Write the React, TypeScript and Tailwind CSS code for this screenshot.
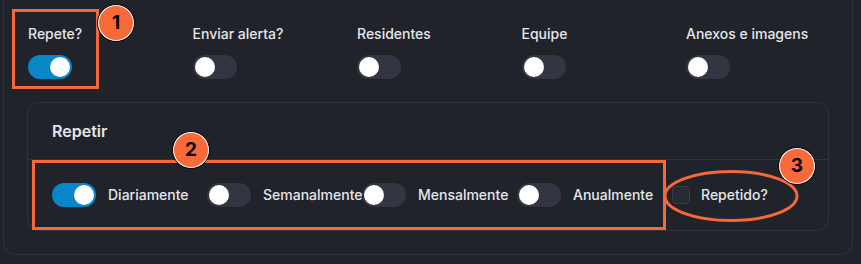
import React from 'react';

const font = { fontFamily: 'Inter, "Noto Sans", sans-serif' };

function Toggle({ on }: { on?: boolean }) {
  return (
    <div
      className={`flex h-6 w-11 shrink-0 items-center rounded-full p-0.5 ${
        on ? 'justify-end bg-[#0786c8]' : 'justify-start bg-[#343542]'
      }`}
    >
      <div className="h-5 w-5 rounded-full bg-white" />
    </div>
  );
}

function Badge({ n, className }: { n: string; className: string }) {
  return (
    <div
      className={`absolute flex h-[38px] w-[38px] items-center justify-center rounded-full border border-black bg-white ${className}`}
    >
      <div className="flex h-[34px] w-[34px] items-center justify-center rounded-full bg-[#f96a3a] text-[19px] font-bold text-black">
        {n}
      </div>
    </div>
  );
}

const topItems = [
  { label: 'Repete?', on: true },
  { label: 'Enviar alerta?' },
  { label: 'Residentes' },
  { label: 'Equipe' },
  { label: 'Anexos e imagens' },
];

const repeatItems = [
  { label: 'Diariamente', on: true },
  { label: 'Semanalmente' },
  { label: 'Mensalmente' },
  { label: 'Anualmente' },
];

export default function App() {
  return (
    <div className="relative h-[264px] w-[861px] overflow-hidden bg-[#21232b] text-[#e6e6e9]" style={font}>
      <div className="ml-[3px] mt-[-20px] w-[850px] rounded-xl border border-[#31333d] px-[23px] pb-[23px] pt-[43px]">
        <div className="grid grid-cols-[repeat(5,164.5px)] pl-px">
          {topItems.map((it) => (
            <div key={it.label} className="flex flex-col items-start gap-[11px]">
              <span className="text-sm font-medium leading-5">{it.label}</span>
              <Toggle on={it.on} />
            </div>
          ))}
        </div>

        <div className="mt-[23px] rounded-xl border border-[#31333d]">
          <div className="border-b border-[#31333d] px-6 py-4 text-base font-semibold leading-6">Repetir</div>
          <div className="flex items-center px-6 py-[23px]">
            {repeatItems.map((it) => (
              <div key={it.label} className="flex w-[155px] shrink-0 items-center gap-3">
                <Toggle on={it.on} />
                <span className="whitespace-nowrap text-sm font-medium leading-5">{it.label}</span>
              </div>
            ))}
            <div className="flex items-center gap-[11px]">
              <div className="h-[18px] w-[18px] rounded-[4px] border border-[#3b3d49] bg-[#282a34]" />
              <span className="text-sm font-medium leading-5">Repetido?</span>
            </div>
          </div>
        </div>
      </div>

      {/* annotations */}
      <div className="absolute left-[12px] top-[9px] h-[80px] w-[87px] border-[3px] border-[#f4683a]" />
      <div className="absolute left-[32px] top-[160px] h-[70px] w-[634px] border-[3px] border-[#f4683a]" />
      <svg className="absolute left-0 top-0" width="861" height="264">
        <ellipse cx="731" cy="196" rx="66" ry="24.5" fill="none" stroke="#f4683a" strokeWidth="3" />
      </svg>
      <Badge n="1" className="left-[97px] top-[4px]" />
      <Badge n="2" className="left-[172px] top-[131px]" />
      <Badge n="3" className="left-[778px] top-[147px]" />
    </div>
  );
}
